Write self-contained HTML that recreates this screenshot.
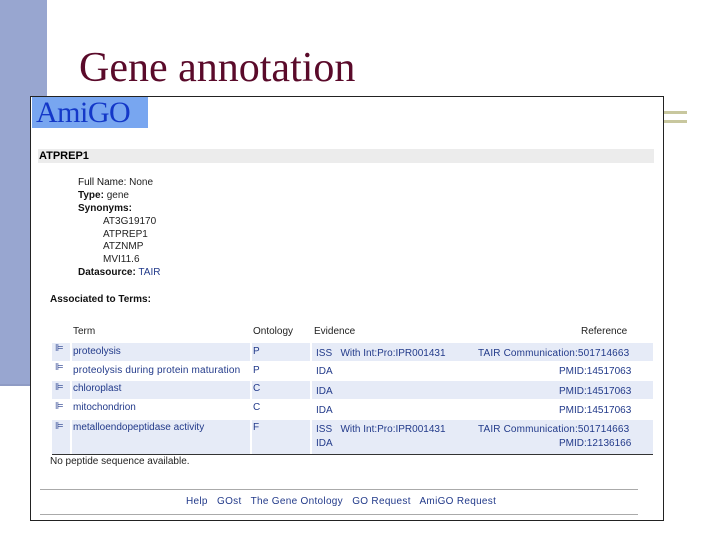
<!DOCTYPE html>
<html><head><meta charset="utf-8"><style>
body{margin:0;width:720px;height:540px;background:#fff;position:relative;overflow:hidden;font-family:"Liberation Sans",sans-serif}
.a{position:absolute}
.t{font-size:10px;color:#222;white-space:nowrap}
.t b{font-weight:bold;color:#111}
.l{color:#223a8a}
.row{position:absolute;left:52px;width:601px;height:18px}
.row div{position:absolute;top:0;height:100%;background:#e6ebf7}
</style></head><body>
<div class="a" style="left:0;top:0;width:47px;height:384px;background:#98a6d0"></div>
<div class="a" style="left:0;top:384px;width:32px;height:2px;background:#8e9bc4"></div>
<div class="a" style="left:663px;top:111px;width:24px;height:3px;background:#c8c79e"></div>
<div class="a" style="left:663px;top:120px;width:24px;height:3px;background:#c8c79e"></div>
<div class="a" style="left:79px;top:44px;font-family:'Liberation Serif',serif;font-size:42px;color:#5a0a2a;line-height:48px">Gene annotation</div>
<div class="a" style="left:30px;top:96px;width:632px;height:423px;border:1px solid #222;background:#fff"></div>
<div class="a" style="left:32px;top:97px;width:116px;height:31px;background:#78a6f0"></div>
<div class="a" style="left:36px;top:97px;font-family:'Liberation Serif',serif;font-size:30px;color:#1438c8;line-height:32px;letter-spacing:-0.5px">AmiGO</div>
<div class="a" style="left:38px;top:149px;width:616px;height:14px;background:#ececec"></div>
<div class="a" style="left:39px;top:149px;font-size:11px;font-weight:bold;line-height:14px">ATPREP1</div>
<div class="a t" style="left:78px;top:177px"><b style="font-weight:normal">Full Name:</b> None</div>
<div class="a t" style="left:78px;top:190px"><b>Type:</b> gene</div>
<div class="a t" style="left:78px;top:203px"><b>Synonyms:</b></div>
<div class="a t" style="left:103px;top:216px">AT3G19170</div>
<div class="a t" style="left:103px;top:229px">ATPREP1</div>
<div class="a t" style="left:103px;top:241px">ATZNMP</div>
<div class="a t" style="left:103px;top:254px">MVI11.6</div>
<div class="a t" style="left:78px;top:267px"><b>Datasource:</b> <span class="l">TAIR</span></div>
<div class="a t" style="left:50px;top:294px"><b>Associated to Terms:</b></div>
<div class="a t" style="left:73px;top:326px">Term</div>
<div class="a t" style="left:253px;top:326px">Ontology</div>
<div class="a t" style="left:314px;top:326px">Evidence</div>
<div class="a t" style="left:581px;top:326px">Reference</div>
<div class="row" style="top:343px"><div style="left:0;width:18px"></div><div style="left:20px;width:178px"></div><div style="left:200px;width:58px"></div><div style="left:260px;width:341px"></div></div>
<div class="row" style="top:381px"><div style="left:0;width:18px"></div><div style="left:20px;width:178px"></div><div style="left:200px;width:58px"></div><div style="left:260px;width:341px"></div></div>
<div class="row" style="top:420px;height:34px"><div style="left:0;width:18px"></div><div style="left:20px;width:178px"></div><div style="left:200px;width:58px"></div><div style="left:260px;width:341px"></div></div>
<div class="a" style="left:52px;top:454px;width:601px;height:1px;background:#333"></div>
<div class="a t l" style="left:55px;top:343px">⊫</div><div class="a t l" style="left:55px;top:362px">⊫</div><div class="a t l" style="left:55px;top:382px">⊫</div><div class="a t l" style="left:55px;top:401px">⊫</div><div class="a t l" style="left:55px;top:421px">⊫</div>
<div class="a t l" style="left:73px;top:346px">proteolysis</div>
<div class="a t l" style="left:73px;top:365px;letter-spacing:0.15px">proteolysis during protein maturation</div>
<div class="a t l" style="left:73px;top:383px">chloroplast</div>
<div class="a t l" style="left:73px;top:402px">mitochondrion</div>
<div class="a t l" style="left:73px;top:422px">metalloendopeptidase activity</div>
<div class="a t l" style="left:253px;top:346px">P</div><div class="a t l" style="left:253px;top:365px">P</div><div class="a t l" style="left:253px;top:383px">C</div><div class="a t l" style="left:253px;top:402px">C</div><div class="a t l" style="left:253px;top:422px">F</div>
<div class="a t l" style="left:316px;top:348px">ISS &nbsp; With Int:Pro:IPR001431</div>
<div class="a t l" style="left:316px;top:366px">IDA</div><div class="a t l" style="left:316px;top:386px">IDA</div><div class="a t l" style="left:316px;top:405px">IDA</div>
<div class="a t l" style="left:316px;top:424px">ISS &nbsp; With Int:Pro:IPR001431</div><div class="a t l" style="left:316px;top:438px">IDA</div>
<div class="a t l" style="left:478px;top:348px;letter-spacing:0.15px">TAIR Communication:501714663</div>
<div class="a t l" style="left:559px;top:366px">PMID:14517063</div>
<div class="a t l" style="left:559px;top:386px">PMID:14517063</div>
<div class="a t l" style="left:559px;top:405px">PMID:14517063</div>
<div class="a t l" style="left:478px;top:424px;letter-spacing:0.15px">TAIR Communication:501714663</div>
<div class="a t l" style="left:559px;top:438px">PMID:12136166</div>
<div class="a t" style="left:50px;top:456px">No peptide sequence available.</div>
<div class="a" style="left:40px;top:489px;width:598px;height:1px;background:#aaa"></div>
<div class="a" style="left:40px;top:514px;width:598px;height:1px;background:#aaa"></div>
<div class="a t" style="left:186px;top:496px;color:#223a8a;letter-spacing:0.3px">Help &nbsp; GOst &nbsp; The Gene Ontology &nbsp; GO Request &nbsp; AmiGO Request</div>
</body></html>
